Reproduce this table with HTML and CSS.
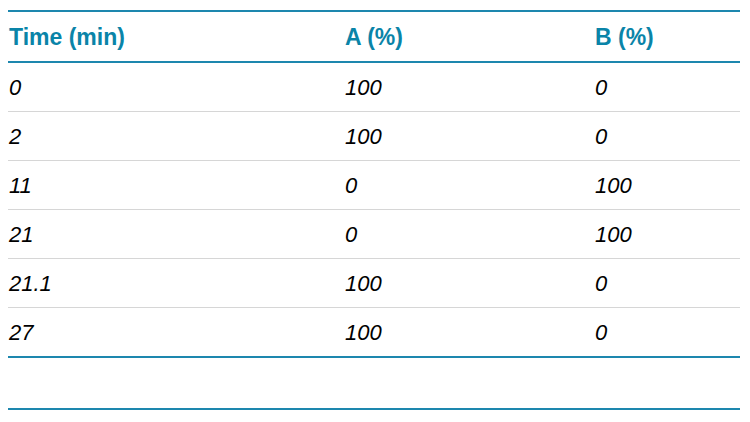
FILE: index.html
```html
<!DOCTYPE html>
<html>
<head>
<meta charset="utf-8">
<link rel="stylesheet" href="styles.css">
</head>
<body>
<table class="grad">
  <colgroup><col class="c1"><col class="c2"><col class="c3"></colgroup>
  <thead>
    <tr><th>Time (min)</th><th>A (%)</th><th>B (%)</th></tr>
  </thead>
  <tbody>
    <tr><td>0</td><td>100</td><td>0</td></tr>
    <tr><td>2</td><td>100</td><td>0</td></tr>
    <tr><td>11</td><td>0</td><td>100</td></tr>
    <tr><td>21</td><td>0</td><td>100</td></tr>
    <tr><td>21.1</td><td>100</td><td>0</td></tr>
    <tr class="last"><td>27</td><td>100</td><td>0</td></tr>
  </tbody>
  <tfoot>
    <tr><td colspan="3"></td></tr>
  </tfoot>
</table>
</body>
</html>
```

FILE: styles.css
```css
html, body {
  margin: 0;
  padding: 0;
  background: #ffffff;
}
body {
  padding: 10px 10px 0 8px;
  font-family: "Liberation Sans", Arial, sans-serif;
}
.grad {
  width: 732px;
  border-collapse: collapse;
  table-layout: fixed;
}
.c1 { width: 336px; }
.c2 { width: 250px; }
.c3 { width: 146px; }
.grad thead tr {
  border-top: 2px solid #1d87ae;
  border-bottom: 2px solid #1d87ae;
}
.grad th {
  height: 48px;
  padding: 1px 0 0 1px;
  text-align: left;
  vertical-align: middle;
  font-weight: bold;
  font-size: 23px;
  color: #0a84a8;
}
.grad td {
  height: 46px;
  padding: 2px 0 0 1px;
  font-style: italic;
  font-size: 22px;
  color: #000;
  vertical-align: middle;
}
.grad tbody tr {
  border-bottom: 1px solid #d6d6d6;
}
.grad tbody tr.last {
  border-bottom: 2px solid #1d87ae;
}
.grad tfoot td {
  height: 48px;
}
.grad tfoot tr {
  border-bottom: 2px solid #1d87ae;
}
```
